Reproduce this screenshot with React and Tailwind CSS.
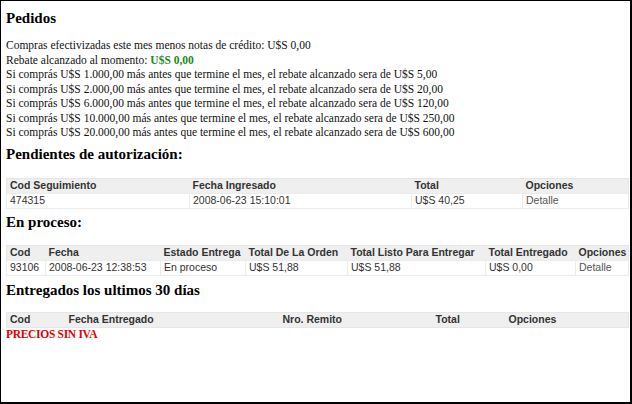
import React from "react";

const serif = "font-['Liberation_Serif','Times_New_Roman',serif]";
const sans = "font-['Liberation_Sans',Arial,sans-serif]";

const rebates = [
  ["1.000,00", "5,00"],
  ["2.000,00", "20,00"],
  ["6.000,00", "120,00"],
  ["10.000,00", "250,00"],
  ["20.000,00", "600,00"],
];

function Heading({ children, className = "" }) {
  return <h2 className={`text-[15px] font-bold leading-[18px] text-black ${className}`}>{children}</h2>;
}

function DataTable({ cols, rows, className = "" }) {
  return (
    <table
      className={`w-[622px] table-fixed border-collapse border border-[#e6e6e6] text-[10.5px] leading-[13px] text-[#333] ${sans} ${className}`}
    >
      <colgroup>
        {cols.map((c) => (
          <col key={c.label} style={{ width: c.w }} />
        ))}
      </colgroup>
      <thead>
        <tr className="bg-[#efefef]">
          {cols.map((c) => (
            <th key={c.label} className="h-[15px] whitespace-nowrap p-0 px-[3px] text-left font-bold">
              {c.label}
            </th>
          ))}
        </tr>
      </thead>
      <tbody>
        {rows.map((r, i) => (
          <tr key={i}>
            {r.map((v, j) => (
              <td
                key={j}
                className={`h-[15px] whitespace-nowrap border border-[#ececec] p-0 px-[3px] ${
                  j === r.length - 1 ? "text-[#555]" : ""
                }`}
              >
                {v}
              </td>
            ))}
          </tr>
        ))}
      </tbody>
    </table>
  );
}

export default function App() {
  return (
    <div
      className={`h-[404px] w-[632px] overflow-hidden border-t border-l border-r-2 border-b-2 border-black bg-white pl-[5px] pt-[8px] ${serif}`}
    >
      <Heading>Pedidos</Heading>
      <div className="mt-[11px] text-[11.5px] leading-[14.5px] text-[#111]">
        <div>Compras efectivizadas este mes menos notas de crédito: U$S 0,00</div>
        <div>
          Rebate alcanzado al momento: <span className="font-bold text-[#1a8a1a]">U$S 0,00</span>
        </div>
        {rebates.map(([a, b]) => (
          <div key={a}>
            Si comprás U$S {a} más antes que termine el mes, el rebate alcanzado sera de U$S {b}
          </div>
        ))}
      </div>
      <Heading className="mt-[5px]">Pendientes de autorización:</Heading>
      <DataTable
        className="mt-[15px]"
        cols={[
          { label: "Cod Seguimiento", w: 183 },
          { label: "Fecha Ingresado", w: 222 },
          { label: "Total", w: 111 },
          { label: "Opciones", w: 106 },
        ]}
        rows={[["474315", "2008-06-23 15:10:01", "U$S 40,25", "Detalle"]]}
      />
      <Heading className="mt-[4px]">En proceso:</Heading>
      <DataTable
        className="mt-[14px]"
        cols={[
          { label: "Cod", w: 39 },
          { label: "Fecha", w: 115 },
          { label: "Estado Entrega", w: 85 },
          { label: "Total De La Orden", w: 102 },
          { label: "Total Listo Para Entregar", w: 138 },
          { label: "Total Entregado", w: 90 },
          { label: "Opciones", w: 53 },
        ]}
        rows={[["93106", "2008-06-23 12:38:53", "En proceso", "U$S 51,88", "U$S 51,88", "U$S 0,00", "Detalle"]]}
      />
      <Heading className="mt-[5px]">Entregados los ultimos 30 días</Heading>
      <DataTable
        className="mt-[13px]"
        cols={[
          { label: "Cod", w: 59 },
          { label: "Fecha Entregado", w: 214 },
          { label: "Nro. Remito", w: 153 },
          { label: "Total", w: 73 },
          { label: "Opciones", w: 123 },
        ]}
        rows={[]}
      />
      <div className="text-[11.5px] font-bold leading-[13px] tracking-[-0.3px] text-[#e00000]">PRECIOS SIN IVA</div>
    </div>
  );
}
